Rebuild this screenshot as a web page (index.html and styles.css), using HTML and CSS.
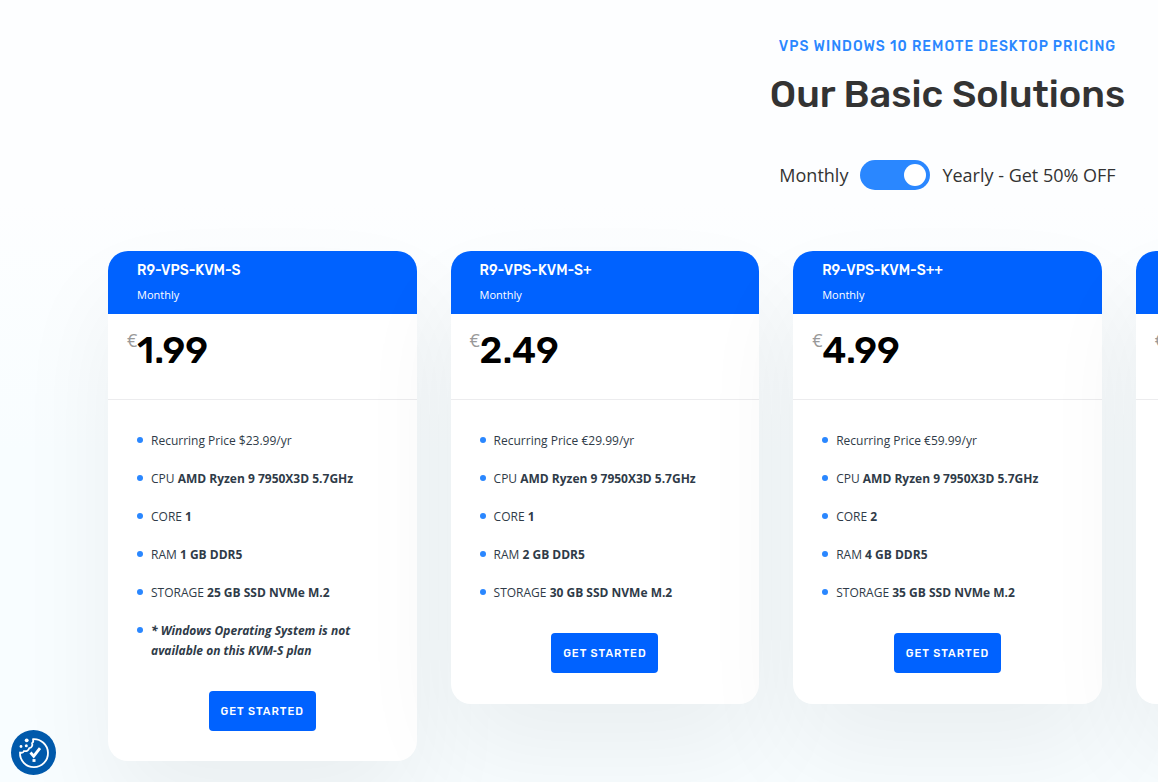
FILE: index.html
```html
<!DOCTYPE html>
<html lang="en">
<head>
  <meta charset="UTF-8" />
  <meta name="viewport" content="width=device-width, initial-scale=1.0" />
  <title>VPS Windows 10 Remote Desktop Pricing</title>
  <link rel="stylesheet" href="styles.css">
</head>
<body>

  <main class="pricing">
    <header class="pricing-header">
      <p class="eyebrow">VPS Windows 10 Remote Desktop Pricing</p>
      <h1>Our Basic Solutions</h1>
      <div class="billing">
        <span>Monthly</span>
        <input type="checkbox" id="billing-toggle" class="switch" checked>
        <label for="billing-toggle">Yearly - Get 50% OFF</label>
      </div>
    </header>

    <div class="plans">
      <article class="plan">
        <div class="plan-head">
          <h2>R9-VPS-KVM-S</h2>
          <p>Monthly</p>
        </div>
        <div class="plan-price"><span class="currency">€</span><span class="amount">1.99</span></div>
        <ul class="features">
          <li>Recurring Price $23.99/yr</li>
          <li>CPU <b>AMD Ryzen 9 7950X3D 5.7GHz</b></li>
          <li>CORE <b>1</b></li>
          <li>RAM <b>1 GB DDR5</b></li>
          <li>STORAGE <b>25 GB SSD NVMe M.2</b></li>
          <li><b><i>* Windows Operating System is not available on this KVM-S plan</i></b></li>
        </ul>
        <button class="btn" type="button">Get Started</button>
      </article>

      <article class="plan">
        <div class="plan-head">
          <h2>R9-VPS-KVM-S+</h2>
          <p>Monthly</p>
        </div>
        <div class="plan-price"><span class="currency">€</span><span class="amount">2.49</span></div>
        <ul class="features">
          <li>Recurring Price €29.99/yr</li>
          <li>CPU <b>AMD Ryzen 9 7950X3D 5.7GHz</b></li>
          <li>CORE <b>1</b></li>
          <li>RAM <b>2 GB DDR5</b></li>
          <li>STORAGE <b>30 GB SSD NVMe M.2</b></li>
        </ul>
        <button class="btn" type="button">Get Started</button>
      </article>

      <article class="plan">
        <div class="plan-head">
          <h2>R9-VPS-KVM-S++</h2>
          <p>Monthly</p>
        </div>
        <div class="plan-price"><span class="currency">€</span><span class="amount">4.99</span></div>
        <ul class="features">
          <li>Recurring Price €59.99/yr</li>
          <li>CPU <b>AMD Ryzen 9 7950X3D 5.7GHz</b></li>
          <li>CORE <b>2</b></li>
          <li>RAM <b>4 GB DDR5</b></li>
          <li>STORAGE <b>35 GB SSD NVMe M.2</b></li>
        </ul>
        <button class="btn" type="button">Get Started</button>
      </article>

      <article class="plan">
        <div class="plan-head"></div>
        <div class="plan-price"><span class="currency">€</span></div>
      </article>
    </div>
  </main>

  <button class="cookie-btn" type="button" aria-label="Cookie settings">
    <svg viewBox="0 0 45 45" width="45" height="45" fill="none" stroke="#fff">
      <path d="M22 9.200A14 14 0 1 1 9 22.500c1.800.6 3.400 0 4-1.500 2.500.7 4.800-.5 5.200-2.800 2.500-.5 3.800-2.700 2.800-5 1.200-.8 1.500-2.400 1-4z" stroke-width="1.800" stroke-linejoin="round"/>
      <path d="M19.500 22.500l3.200 3.700 6.300-8" stroke-width="2.800"/>
      <path d="M21.500 30.500h3" stroke-width="2.800"/>
      <g fill="#fff" stroke="none">
        <circle cx="15.700" cy="10.300" r="1.900"/>
        <circle cx="10" cy="16.500" r="1.400"/>
        <circle cx="15.300" cy="15.800" r="1.500"/>
      </g>
    </svg>
  </button>

</body>
</html>
```

FILE: styles.css
```css
* {
  box-sizing: border-box;
}

body {
  margin: 0;
  min-height: 100vh;
  overflow: hidden;
  font-family: 'Open Sans', sans-serif;
  color: #333;
  background: linear-gradient(#fdfeff 200px, #f8fdff 450px);
}

h1, h2, p, ul {
  margin: 0;
  padding: 0;
}

.pricing {
  width: 1679px;
  margin-left: 108px;
  padding: 37px 0 60px;
}

.pricing-header {
  display: flex;
  flex-direction: column;
  align-items: center;
}

.eyebrow {
  font-family: Rubik, Roboto, sans-serif;
  font-size: 14px;
  line-height: 20px;
  font-weight: 500;
  letter-spacing: 1px;
  text-transform: uppercase;
  color: #2a87ff;
}

h1 {
  margin-top: 12px;
  font-family: Rubik, Roboto, sans-serif;
  font-size: 38px;
  line-height: 50px;
  font-weight: 500;
}

.billing {
  display: flex;
  align-items: center;
  gap: 12px;
  margin-top: 41px;
  font-size: 18px;
  line-height: 30px;
}

.switch {
  appearance: none;
  display: flex;
  align-items: center;
  justify-content: flex-end;
  width: 70px;
  height: 30px;
  margin: 0;
  padding: 4px;
  border-radius: 15px;
  background: #2a87ff;
  cursor: pointer;
}

.switch::before {
  content: "";
  width: 22px;
  height: 22px;
  border-radius: 50%;
  background: #fff;
}

.switch:not(:checked) {
  justify-content: flex-start;
}

.plans {
  display: grid;
  grid-template-columns: repeat(5, 1fr);
  align-items: start;
  gap: 34px;
  margin-top: 61px;
}

.plan {
  display: flex;
  flex-direction: column;
  min-height: 453px;
  padding-bottom: 30px;
  border-radius: 20px;
  background: #fff;
  box-shadow: 0 50px 100px rgba(0, 0, 0, 0.06);
}

.plan-head {
  height: 63px;
  padding: 10px 29px;
  border-radius: 20px 20px 0 0;
  background: #0062ff;
  color: #fff;
}

.plan-head h2 {
  font-family: Rubik, Roboto, sans-serif;
  font-size: 14px;
  line-height: 20px;
  font-weight: 500;
}

.plan-head p {
  margin-top: 4px;
  font-size: 11px;
  line-height: 20px;
}

.plan-price {
  display: flex;
  align-items: flex-start;
  height: 86px;
  padding: 11px 19px;
  border-bottom: 1px solid #ececee;
}

.currency {
  width: 10px;
  font-size: 18px;
  line-height: 30px;
  color: #999;
}

.amount {
  font-family: Rubik, Roboto, sans-serif;
  font-size: 37px;
  line-height: 50px;
  font-weight: 500;
  color: #000;
}

.features {
  display: grid;
  gap: 18px;
  padding: 31px 43px 30px;
  list-style: none;
  font-size: 12px;
  line-height: 20px;
  color: #2f3b48;
}

.features li {
  position: relative;
}

.features li::before {
  content: "";
  position: absolute;
  top: 6px;
  left: -14px;
  width: 6px;
  height: 6px;
  border-radius: 50%;
  background: #2a87ff;
}

.btn {
  align-self: center;
  width: 107px;
  height: 40px;
  padding: 0;
  border: none;
  border-radius: 4px;
  background: #0062ff;
  color: #fff;
  font-family: Rubik, Roboto, sans-serif;
  font-size: 11px;
  font-weight: 500;
  letter-spacing: 1px;
  text-transform: uppercase;
  cursor: pointer;
}

.cookie-btn {
  position: fixed;
  left: 11px;
  bottom: 7px;
  width: 45px;
  height: 45px;
  padding: 0;
  border: none;
  border-radius: 50%;
  background: #0059ab;
  cursor: pointer;
}

.cookie-btn svg {
  display: block;
}
```
